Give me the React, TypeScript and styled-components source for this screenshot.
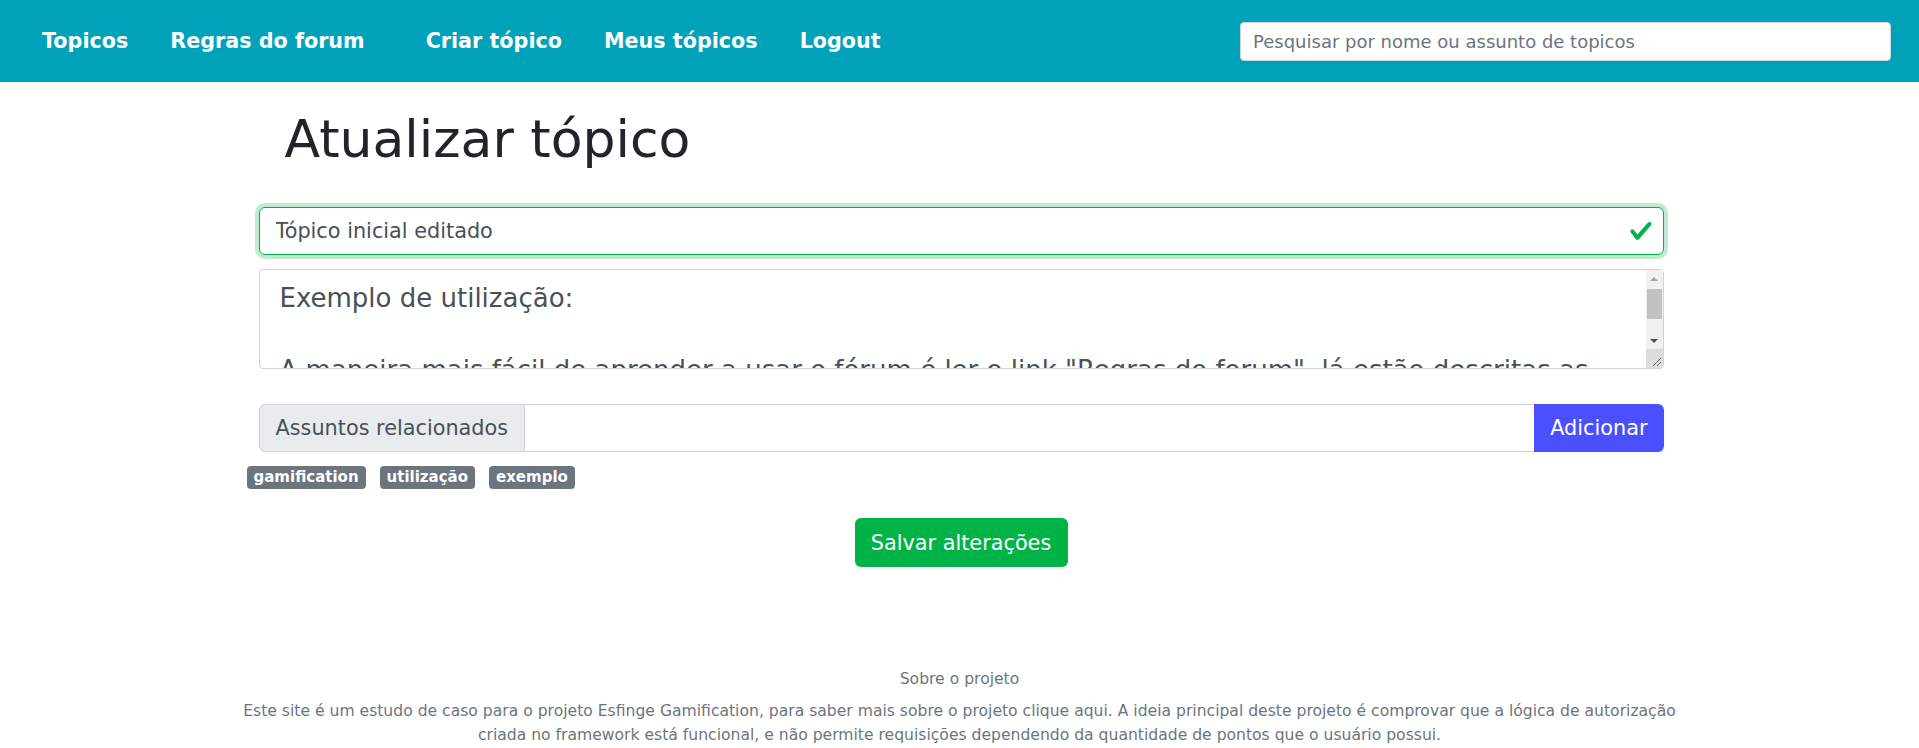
import React from "react";
import styled, { createGlobalStyle } from "styled-components";

const GlobalStyle = createGlobalStyle`
  * {
    box-sizing: border-box;
  }

  body {
    margin: 0;
    background: #ffffff;
    color: #212529;
    font-family: "DejaVu Sans", "Liberation Sans", sans-serif;
  }
`;

const navLinks = [
  { label: "Topicos", extra: 0 },
  { label: "Regras do forum", extra: 19 },
  { label: "Criar tópico", extra: 0 },
  { label: "Meus tópicos", extra: 0 },
  { label: "Logout", extra: 0 },
];

const tags = ["gamification", "utilização", "exemplo"];

const bodyText = `Exemplo de utilização:

A maneira mais fácil de aprender a usar o fórum é ler o link "Regras do forum", lá estão descritas as ações permitidas.

Cada ação realizada gera pontos para o usuário, e esses pontos liberam novas funcionalidades.

Exemplo: criar um tópico, responder um tópico, avaliar uma resposta.

Bons estudos!`;

const Navbar = styled.nav`
  display: flex;
  align-items: center;
  height: 82px;
  padding: 0 28px 0 42px;
  background: #00a2b9;
`;

const NavLink = styled.a<{ $extra: number }>`
  margin-right: ${(p) => 42 + p.$extra}px;
  color: #ffffff;
  font-size: 20.7px;
  font-weight: 700;
  text-decoration: none;
  white-space: nowrap;
`;

const SearchInput = styled.input`
  width: 651px;
  height: 39px;
  margin-left: auto;
  padding: 0 12px;
  border: 1px solid #ced4da;
  border-radius: 4px;
  background: #ffffff;
  color: #495057;
  font-family: inherit;
  font-size: 18px;

  &::placeholder {
    color: #6c757d;
  }
`;

const Container = styled.main`
  width: 1434px;
  margin: 0 auto;
`;

const PageTitle = styled.h1`
  margin: 26px 0 0;
  padding-left: 42px;
  color: #212529;
  font-size: 52px;
  font-weight: 400;
  line-height: 62px;
`;

const Form = styled.form`
  display: flex;
  flex-direction: column;
  padding: 0 13px 0 16px;
`;

const FieldWrap = styled.div<{ $gap: number }>`
  position: relative;
  margin-top: ${(p) => p.$gap}px;
`;

const TitleInput = styled.input`
  display: block;
  width: 100%;
  height: 48px;
  padding: 0 48px 0 16px;
  border: 1px solid #00b347;
  border-radius: 6px;
  box-shadow: 0 0 0 4px rgba(0, 179, 71, 0.25);
  color: #495057;
  font-family: inherit;
  font-size: 20.8px;
  outline: none;
`;

const ValidIcon = styled.svg`
  position: absolute;
  top: 12px;
  right: 11px;
  width: 24px;
  height: 24px;
`;

const BodyArea = styled.textarea`
  display: block;
  width: 100%;
  height: 100px;
  padding: 10px 38px 10px 20px;
  border: 1px solid #ced4da;
  border-radius: 4px;
  color: #495057;
  font-family: inherit;
  font-size: 26px;
  line-height: 36px;
  outline: none;
  overflow: hidden;
  resize: none;
`;

const ScrollBar = styled.div`
  position: absolute;
  top: 1px;
  right: 1px;
  bottom: 1px;
  display: flex;
  flex-direction: column;
  width: 17px;
  border-radius: 0 3px 3px 0;
  background: #f1f1f1;
  overflow: hidden;
`;

const ScrollArrow = styled.div<{ $down?: boolean; $color: string }>`
  display: flex;
  align-items: center;
  justify-content: center;
  height: 17px;

  &::before {
    content: "";
    border-left: 4px solid transparent;
    border-right: 4px solid transparent;
    ${(p) =>
      p.$down
        ? `border-top: 4px solid ${p.$color};`
        : `border-bottom: 4px solid ${p.$color};`}
  }
`;

const ScrollThumb = styled.div`
  height: 30px;
  margin: 2px 1px 0;
  background: #c1c1c1;
`;

const ScrollSpace = styled.div`
  flex: 1;
`;

const Resizer = styled.svg`
  display: block;
  width: 17px;
  height: 19px;
  background: #dcdcdc;
`;

const InputGroup = styled.div`
  display: flex;
  height: 48px;
  margin-top: 35px;
`;

const GroupLabel = styled.span`
  display: flex;
  align-items: center;
  padding: 0 16px;
  border: 1px solid #ced4da;
  border-radius: 6px 0 0 6px;
  background: #e9ecef;
  color: #495057;
  font-size: 20.8px;
  white-space: nowrap;
`;

const GroupInput = styled.input`
  flex: 1;
  min-width: 0;
  border: 1px solid #ced4da;
  border-left: none;
  border-right: none;
  font-family: inherit;
  font-size: 20px;
  outline: none;
`;

const AddButton = styled.button`
  padding: 0 16px;
  border: none;
  border-radius: 0 6px 6px 0;
  background: #4b50ff;
  color: #ffffff;
  font-family: inherit;
  font-size: 20.8px;
`;

const TagRow = styled.div`
  display: flex;
  gap: 14px;
  margin: 14px 0 0 -12px;
`;

const Tag = styled.span`
  padding: 4px 7px;
  border-radius: 4px;
  background: #6c757d;
  color: #ffffff;
  font-size: 15px;
  font-weight: 700;
  line-height: 15px;
`;

const SaveButton = styled.button`
  align-self: center;
  width: 213px;
  height: 49px;
  margin-top: 29px;
  border: none;
  border-radius: 6px;
  background: #00b347;
  color: #ffffff;
  font-family: inherit;
  font-size: 20.8px;
`;

const Footer = styled.footer`
  width: 1470px;
  margin: 100px auto 0;
  color: #6c757d;
  font-size: 15.6px;
  line-height: 24px;
  text-align: center;
`;

const FooterTitle = styled.div`
  margin-bottom: 8px;
`;

const FooterText = styled.p`
  margin: 0;
`;

export default function App() {
  return (
    <>
      <GlobalStyle />
      <Navbar>
        {navLinks.map((link) => (
          <NavLink key={link.label} href="#" $extra={link.extra}>
            {link.label}
          </NavLink>
        ))}
        <SearchInput placeholder="Pesquisar por nome ou assunto de topicos" />
      </Navbar>

      <Container>
        <PageTitle>Atualizar tópico</PageTitle>
        <Form onSubmit={(e) => e.preventDefault()}>
          <FieldWrap $gap={37}>
            <TitleInput defaultValue="Tópico inicial editado" />
            <ValidIcon viewBox="0 0 8 8">
              <path
                fill="#00b347"
                d="M2.3 6.73.6 4.53c-.4-1.04.46-1.4 1.1-.8l1.1 1.4 3.4-3.8c.6-.63 1.6-.27 1.2.7l-4 4.6c-.43.5-.8.4-1.1.1z"
              />
            </ValidIcon>
          </FieldWrap>

          <FieldWrap $gap={14}>
            <BodyArea defaultValue={bodyText} />
            <ScrollBar aria-hidden>
              <ScrollArrow $color="#a3a3a3" />
              <ScrollThumb />
              <ScrollSpace />
              <ScrollArrow $down $color="#505050" />
              <Resizer viewBox="0 0 17 19">
                <path
                  d="M15 9 7 17M15 13 11 17"
                  stroke="#6a6a6a"
                  strokeWidth="1"
                  fill="none"
                />
              </Resizer>
            </ScrollBar>
          </FieldWrap>

          <InputGroup>
            <GroupLabel>Assuntos relacionados</GroupLabel>
            <GroupInput />
            <AddButton type="button">Adicionar</AddButton>
          </InputGroup>

          <TagRow>
            {tags.map((tag) => (
              <Tag key={tag}>{tag}</Tag>
            ))}
          </TagRow>

          <SaveButton type="submit">Salvar alterações</SaveButton>
        </Form>
      </Container>

      <Footer>
        <FooterTitle>Sobre o projeto</FooterTitle>
        <FooterText>
          Este site é um estudo de caso para o projeto Esfinge Gamification,
          para saber mais sobre o projeto clique aqui. A ideia principal deste
          projeto é comprovar que a lógica de autorização criada no framework
          está funcional, e não permite requisições dependendo da quantidade de
          pontos que o usuário possui.
        </FooterText>
      </Footer>
    </>
  );
}
